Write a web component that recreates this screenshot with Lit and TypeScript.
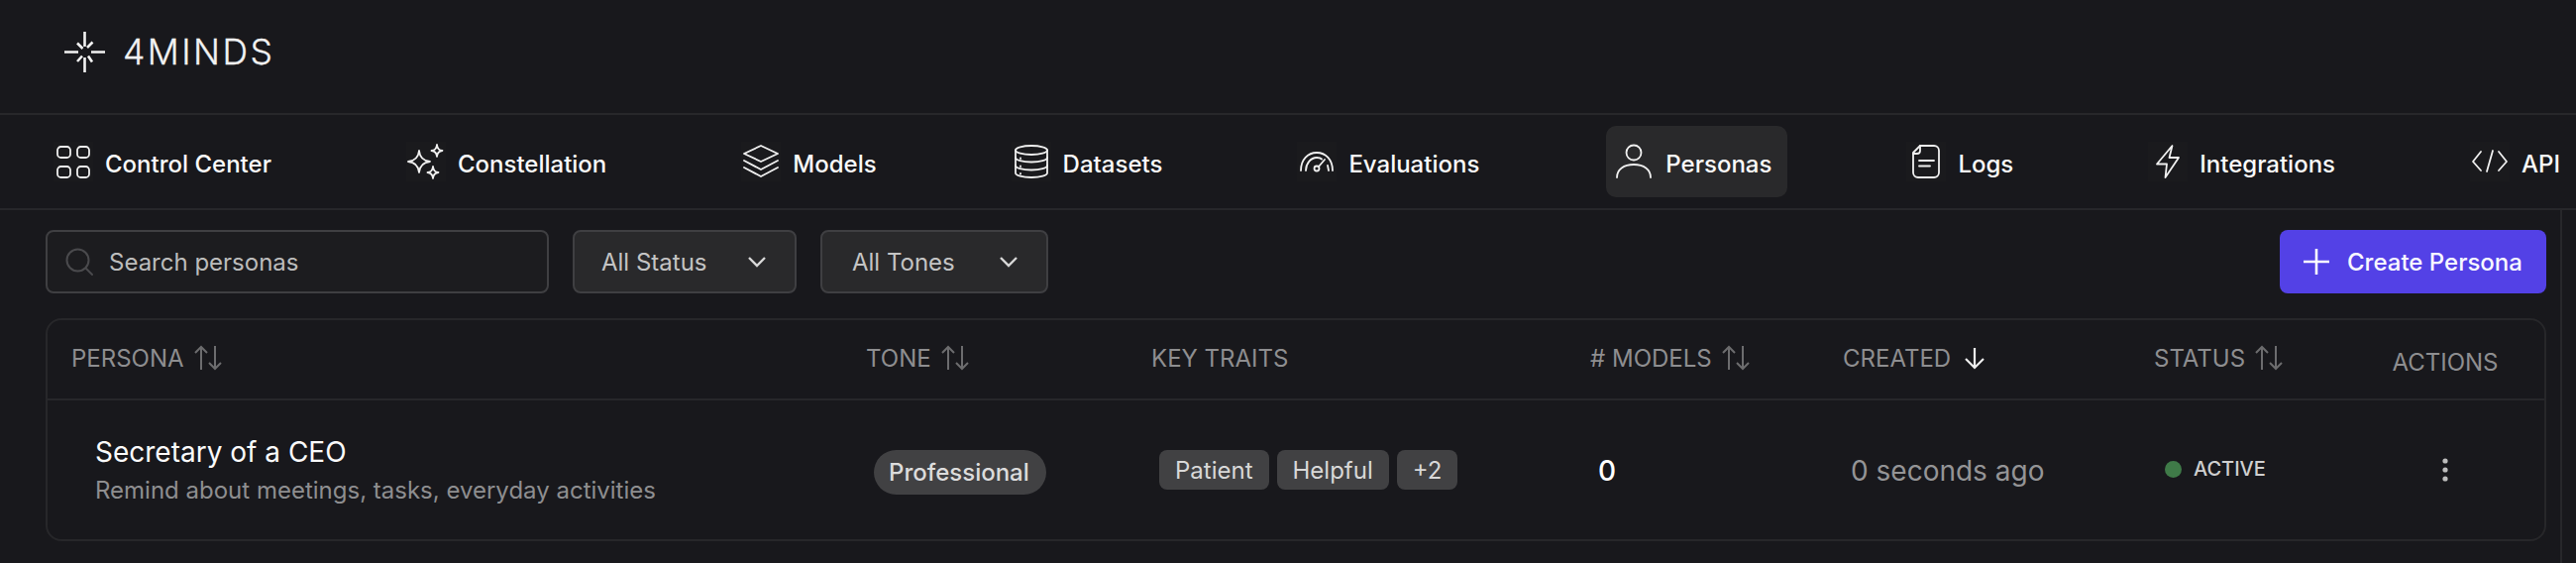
import { LitElement, html, css, svg } from "lit";
import { customElement } from "lit/decorators.js";

const icons: Record<string, unknown> = {
  control: svg`<rect x="4" y="5" width="13" height="11" rx="3.500"/><rect x="24" y="5" width="12" height="11" rx="3.500"/><rect x="4" y="25" width="13" height="11" rx="3.500"/><rect x="24" y="25" width="12" height="11" rx="3.500"/>`,
  stars: svg`<path d="M13 9Q14 19 24 20Q14 21 13 31Q12 21 2 20Q12 19 13 9Z"/><path d="M31 3Q31.5 8.5 36.5 9Q31.5 9.5 31 15Q30.5 9.5 25.5 9Q30.5 8.5 31 3Z"/><path d="M27 25Q27.5 30.5 32.5 31Q27.5 31.5 27 37Q26.5 31.5 21.5 31Q26.5 30.5 27 25Z"/>`,
  layers: svg`<path d="M20 4L37 12L20 20L3 12Z"/><path d="M3 19L20 28L37 19"/><path d="M3 26L20 35L37 26"/>`,
  db: svg`<ellipse cx="20" cy="8.5" rx="16" ry="4.5"/><path d="M4 8.5V31.5C4 34 11 36 20 36C29 36 36 34 36 31.5V8.5"/><path d="M4 16C4 18.5 11 20.5 20 20.5C29 20.5 36 18.5 36 16"/><path d="M4 24C4 26.5 11 28.5 20 28.5C29 28.5 36 26.5 36 24"/><path d="M9 16.5v.5M9 24.5v.5M9 32v.5"/>`,
  gauge: svg`<path d="M4 29C4 18 11 11 20 11C29 11 36 18 36 29"/><path d="M9 29C9 22 14 16 20 16C22 16 24 16.500 25 17.500"/><path d="M31 24L32 29"/><circle cx="20" cy="27" r="2.500"/><path d="M22 25L28 18"/>`,
  person: svg`<circle cx="20" cy="11" r="7.500"/><path d="M3 36C3 28 10 23 20 23C30 23 37 28 37 36"/>`,
  doc: svg`<path d="M14 4H28A5 5 0 0 1 33 9V31A5 5 0 0 1 28 36H12A5 5 0 0 1 7 31V11Z"/><path d="M7 12H11A3 3 0 0 0 14 9V4"/><path d="M13 19H28M13 24.500H24"/>`,
  bolt: svg`<path d="M24.500 4L9 22.500H19L17.500 36L31 16H21.500Z"/>`,
  code: svg`<path d="M11 10L3 20L11 29M29 10L37 20L29 29M23 9L17 30"/>`,
};

const nav = [
  ["control", "Control Center"],
  ["stars", "Constellation"],
  ["layers", "Models"],
  ["db", "Datasets"],
  ["gauge", "Evaluations"],
  ["person", "Personas"],
  ["doc", "Logs"],
  ["bolt", "Integrations"],
  ["code", "API"],
];

const sortIcon = html`<svg class="sort" viewBox="0 0 30 26"><path d="M8 25V2M2 8L8 2L14 8"/><path d="M22 1V24M16 18L22 24L28 18"/></svg>`;

@customElement("app-root")
export class AppRoot extends LitElement {
  static styles = css`
    :host {
      display: block;
      width: 2600px;
      height: 568px;
      overflow: hidden;
      background: #18181c;
      font-family: "Inter", "Liberation Sans", sans-serif;
      color: #fff;
    }
    .brand {
      height: 116px;
      box-sizing: border-box;
      border-bottom: 2px solid #27272a;
      display: flex;
      align-items: flex-start;
      padding: 32px 0 0 65px;
      gap: 18px;
    }
    .mark {
      width: 41px;
      height: 41px;
      fill: none;
      stroke: #f2f2f2;
      stroke-width: 2.6;
    }
    .word {
      font-size: 35.500px;
      font-weight: 300;
      letter-spacing: 2.500px;
      line-height: 41px;
      -webkit-text-stroke: 0.3px #f2f2f2;
      color: #f2f2f2;
    }
    nav {
      height: 96px;
      box-sizing: border-box;
      border-bottom: 2px solid #27272a;
      display: flex;
      align-items: center;
      gap: 112px;
      padding: 0 0 0 46px;
      white-space: nowrap;
    }
    .item {
      height: 72px;
      box-sizing: border-box;
      display: flex;
      flex: none;
      align-items: center;
      gap: 12px;
      padding: 0 16px 0 8px;
      border-radius: 10px;
      font-size: 24px;
      font-weight: 500;
      color: #fafafa;
    }
    .item span {
      padding-top: 4px;
    }
    .item.on {
      background: #29292b;
    }
    .ico {
      width: 40px;
      height: 40px;
      flex: none;
      background: #1a1a1d;
      fill: none;
      stroke: #f0f0f0;
      stroke-width: 1.800;
      stroke-linecap: round;
      stroke-linejoin: round;
    }
    .on .ico {
      background: transparent;
    }
    .content {
      width: 2586px;
      height: 356px;
      box-sizing: border-box;
      border-right: 2px solid #27272a;
      padding: 20px 14px 0 46px;
    }
    .bar {
      display: flex;
      align-items: stretch;
      height: 64px;
      gap: 24px;
    }
    .search {
      width: 508px;
      box-sizing: border-box;
      display: flex;
      align-items: center;
      gap: 15px;
      padding-left: 17px;
      background: #1c1c1f;
      border: 2px solid #3f3f42;
      border-radius: 8px;
      font-size: 24px;
      color: #bcbcbc;
    }
    .search svg {
      width: 30px;
      height: 30px;
      fill: none;
      stroke: #4a4a4d;
      stroke-width: 2;
      stroke-linecap: round;
    }
    .select {
      box-sizing: border-box;
      display: flex;
      align-items: center;
      justify-content: space-between;
      background: #29292b;
      border: 2px solid #3f3f42;
      border-radius: 8px;
      font-size: 24px;
      color: #c4c4c4;
    }
    .s1 {
      width: 226px;
      padding: 0 29px 0 27px;
    }
    .s2 {
      width: 230px;
      padding: 0 29px 0 30px;
    }
    .select svg {
      width: 18px;
      height: 11px;
      fill: none;
      stroke: #d8d8d8;
      stroke-width: 2.4;
    }
    .spacer {
      flex: 1;
    }
    .create {
      width: 269px;
      box-sizing: border-box;
      display: flex;
      align-items: center;
      gap: 17px;
      padding-left: 23px;
      background: #5341e6;
      border-radius: 8px;
      font-size: 24px;
      font-weight: 500;
      color: #f8f8ff;
    }
    .create svg {
      width: 28px;
      height: 28px;
      fill: none;
      stroke: #fff;
      stroke-width: 2.6;
    }
    .table {
      margin-top: 25px;
      width: 2524px;
      height: 225px;
      box-sizing: border-box;
      border: 2px solid #27272a;
      border-radius: 16px;
    }
    .row {
      display: grid;
      grid-template-columns: 802px 287px 443px 255px 314px 219px 200px;
    }
    .head {
      height: 81px;
      box-sizing: border-box;
      border-bottom: 2px solid #27272a;
      font-size: 24px;
      color: #8e8e90;
    }
    .th {
      display: flex;
      align-items: center;
      gap: 9px;
      padding: 0 0 3px 25px;
    }
    .th.lead {
      padding-left: 24px;
    }
    .th.actions {
      padding: 5px 0 0;
      justify-content: center;
    }
    .sort {
      width: 30px;
      height: 26px;
      fill: none;
      stroke: #6c6c6e;
      stroke-width: 2;
    }
    .down {
      width: 24px;
      height: 24px;
      fill: none;
      stroke: #eee;
      stroke-width: 2.2;
      margin-left: 3px;
    }
    .td {
      height: 139px;
      box-sizing: border-box;
    }
    .persona {
      padding: 34px 0 0 48px;
    }
    .name {
      font-size: 28px;
      font-weight: 400;
      line-height: 36px;
      color: #fafafa;
    }
    .desc {
      margin-top: 6px;
      font-size: 24px;
      line-height: 30px;
      color: #8e8e90;
    }
    .tone {
      padding: 50px 0 0 32px;
    }
    .pill {
      display: inline-flex;
      align-items: center;
      height: 45px;
      padding: 0 17px 0 15px;
      border-radius: 23px;
      background: #414143;
      font-size: 24px;
      font-weight: 500;
      color: #dcdcdc;
    }
    .traits {
      padding: 50px 0 0 33px;
      display: flex;
      align-items: flex-start;
      gap: 8px;
    }
    .tag {
      display: flex;
      align-items: center;
      height: 40px;
      padding: 0 16px;
      border-radius: 8px;
      background: #414143;
      font-size: 24px;
      color: #d8d8d8;
    }
    .num {
      padding: 54px 0 0 33px;
      font-size: 28px;
      line-height: 34px;
      font-weight: 500;
      color: #fff;
    }
    .ago {
      padding: 54px 0 0 33px;
      font-size: 28px;
      line-height: 34px;
      color: #949496;
    }
    .status {
      padding: 57px 0 0 36px;
      display: flex;
      align-items: flex-start;
      gap: 12px;
      font-size: 20px;
      line-height: 24px;
      font-weight: 500;
      color: #cfcfcf;
    }
    .dot {
      width: 17px;
      height: 17px;
      margin-top: 4px;
      border-radius: 50%;
      background: #3f7a48;
    }
    .more {
      padding-top: 58px;
      display: flex;
      justify-content: center;
    }
    .more svg {
      width: 6px;
      height: 24px;
      fill: #bdbdbd;
    }
  `;

  render() {
    return html`
      <div class="brand">
        <svg class="mark" viewBox="0 0 41 41">
          <path d="M20.500 0V15M20.500 26V41M0 20.500H14M27 20.500H41M13 11.500L18.500 17M28.500 10.500L23 16M13 30L18 24.500M28 30.500L24 24.500" />
        </svg>
        <span class="word">4MINDS</span>
      </div>
      <nav>
        ${nav.map(
          ([k, label]) => html`<div class="item ${label === "Personas" ? "on" : ""}">
            <svg class="ico" viewBox="0 0 40 40">${icons[k]}</svg><span>${label}</span>
          </div>`
        )}
      </nav>
      <div class="content">
        <div class="bar">
          <div class="search">
            <svg viewBox="0 0 30 30"><circle cx="13.500" cy="13.500" r="11" /><path d="M22 22L28 28" /></svg>
            <span>Search personas</span>
          </div>
          <div class="select s1">
            <span>All Status</span>
            <svg viewBox="0 0 18 11"><path d="M1 1L9 9L17 1" /></svg>
          </div>
          <div class="select s2">
            <span>All Tones</span>
            <svg viewBox="0 0 18 11"><path d="M1 1L9 9L17 1" /></svg>
          </div>
          <div class="spacer"></div>
          <div class="create">
            <svg viewBox="0 0 28 28"><path d="M14 1V27M1 14H27" /></svg>
            <span>Create Persona</span>
          </div>
        </div>
        <div class="table">
          <div class="row head">
            <div class="th lead">PERSONA ${sortIcon}</div>
            <div class="th lead">TONE ${sortIcon}</div>
            <div class="th">KEY TRAITS</div>
            <div class="th"># MODELS ${sortIcon}</div>
            <div class="th">CREATED <svg class="down" viewBox="0 0 24 24"><path d="M12 2V22M3 13L12 22L21 13" /></svg></div>
            <div class="th">STATUS ${sortIcon}</div>
            <div class="th actions">ACTIONS</div>
          </div>
          <div class="row">
            <div class="td persona">
              <div class="name">Secretary of a CEO</div>
              <div class="desc">Remind about meetings, tasks, everyday activities</div>
            </div>
            <div class="td tone"><span class="pill">Professional</span></div>
            <div class="td traits">
              <span class="tag">Patient</span><span class="tag">Helpful</span><span class="tag">+2</span>
            </div>
            <div class="td num">0</div>
            <div class="td ago">0 seconds ago</div>
            <div class="td status"><span class="dot"></span><span>ACTIVE</span></div>
            <div class="td more">
              <svg viewBox="0 0 6 24"><circle cx="3" cy="3" r="2.600" /><circle cx="3" cy="12" r="2.600" /><circle cx="3" cy="21" r="2.600" /></svg>
            </div>
          </div>
        </div>
      </div>
    `;
  }
}
